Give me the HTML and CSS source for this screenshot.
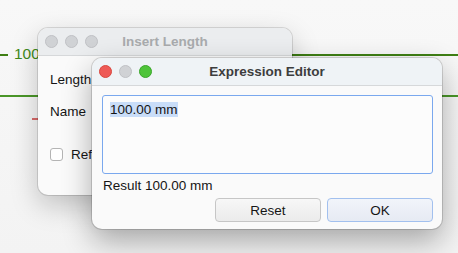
FILE: index.html
```html
<!DOCTYPE html>
<html>
<head>
<meta charset="utf-8">
<link rel="stylesheet" href="styles.css">
</head>
<body>
<div class="desk">
  <div class="dim dim-top-a"></div>
  <div class="dim-label">100</div>
  <div class="dim dim-top-b"></div>
  <div class="dim dim-mid"></div>
  <div class="dim-red"></div>

  <div class="win back">
    <div class="titlebar">
      <div class="lights">
        <span class="light gray"></span>
        <span class="light gray"></span>
        <span class="light gray"></span>
      </div>
      <div class="title dim-title">Insert Length</div>
    </div>
    <div class="back-body">
      <div class="row">Length</div>
      <div class="row">Name</div>
      <div class="row check-row"><span class="checkbox"></span><span>Reference</span></div>
    </div>
  </div>

  <div class="win front">
    <div class="titlebar">
      <div class="lights">
        <span class="light red"></span>
        <span class="light gray"></span>
        <span class="light green"></span>
      </div>
      <div class="title">Expression Editor</div>
    </div>
    <div class="front-body">
      <div class="editor"><span class="sel">100.00 mm</span></div>
      <div class="result">Result 100.00 mm</div>
      <div class="buttons">
        <div class="btn">Reset</div>
        <div class="btn default">OK</div>
      </div>
    </div>
  </div>
</div>
</body>
</html>
```

FILE: styles.css
```css
html, body {
  margin: 0;
  padding: 0;
}
body {
  width: 458px;
  height: 253px;
  overflow: hidden;
  font-family: "Liberation Sans", Arial, sans-serif;
  font-size: 13.5px;
  color: #151515;
}
.desk {
  position: relative;
  width: 458px;
  height: 253px;
  background: linear-gradient(#f8f8f8, #f3f3f3);
  overflow: hidden;
}
.dim {
  position: absolute;
  height: 2px;
  background: #3f7f14;
}
.dim-top-a { left: 0; top: 54px; width: 8px; }
.dim-top-b { left: 40px; top: 54px; width: 418px; }
.dim-mid { left: 0; top: 95px; width: 458px; background: #4a9628; }
.dim-label {
  position: absolute;
  left: 14px;
  top: 45px;
  color: #3f8a18;
  font-size: 15.5px;
}
.dim-red {
  position: absolute;
  left: 32px;
  top: 118px;
  width: 10px;
  height: 2px;
  background: #d86a6a;
}

.win {
  position: absolute;
  border-radius: 10px;
  background: #fafafa;
  overflow: hidden;
  display: flex;
  flex-direction: column;
}
.back {
  left: 38px;
  top: 28px;
  width: 254px;
  height: 167px;
  box-shadow: 0 0 0 1px rgba(0,0,0,0.12), 0 10px 28px rgba(0,0,0,0.22);
}
.front {
  left: 92px;
  top: 58px;
  width: 350px;
  height: 171px;
  box-shadow: 0 0 0 1px rgba(0,0,0,0.14), 0 12px 30px rgba(0,0,0,0.32);
}
.titlebar {
  height: 27px;
  flex: none;
  background: #eff3f6;
  border-bottom: 1px solid #d6d8da;
  display: flex;
  align-items: center;
  position: relative;
}
.back .titlebar { background: #ebedef; }
.lights {
  display: flex;
  gap: 7px;
  padding-left: 7px;
}
.light {
  width: 13px;
  height: 13px;
  border-radius: 50%;
  box-sizing: border-box;
}
.light.gray { background: #d0d2d5; border: 1px solid #bfc1c4; }
.light.red { background: #ee5a56; border: 1px solid #d8473f; }
.light.green { background: #4fc43a; border: 1px solid #3aa62a; }
.title {
  position: absolute;
  left: 0;
  right: 0;
  text-align: center;
  font-weight: bold;
  font-size: 13.5px;
  color: #3d3d3d;
  pointer-events: none;
}
.title.dim-title { color: #a9abad; }

.back-body {
  display: flex;
  flex-direction: column;
  padding: 16px 0 0 12px;
}
.row { height: 32px; line-height: 16px; }
.check-row {
  margin-top: 11px;
  display: flex;
  align-items: flex-start;
  gap: 8px;
}
.checkbox {
  width: 13px;
  height: 13px;
  box-sizing: border-box;
  border: 1px solid #b4b4b4;
  border-radius: 3px;
  background: #fff;
  margin-top: 1px;
}

.front-body {
  flex: 1;
  display: flex;
  flex-direction: column;
  padding: 9px 9px 0 10px;
}
.editor {
  height: 79px;
  box-sizing: border-box;
  border: 1px solid #7aa8ee;
  border-radius: 3px;
  background: #fcfcfc;
  padding: 6px 7px;
  line-height: 16px;
}
.sel { background: #c9ddf8; }
.result {
  padding: 4px 0 0 1px;
  line-height: 16px;
}
.buttons {
  display: flex;
  justify-content: flex-end;
  gap: 6px;
  margin-top: 4px;
}
.btn {
  width: 106px;
  height: 24px;
  box-sizing: border-box;
  border: 1px solid #c6c6c6;
  border-radius: 4px;
  background: linear-gradient(#f7f7f7, #ebebeb);
  display: flex;
  align-items: center;
  justify-content: center;
  font-size: 13.5px;
}
.btn.default {
  border-color: #a2c0ee;
  background: linear-gradient(#f1f4fa, #e6eaf3);
}
```
